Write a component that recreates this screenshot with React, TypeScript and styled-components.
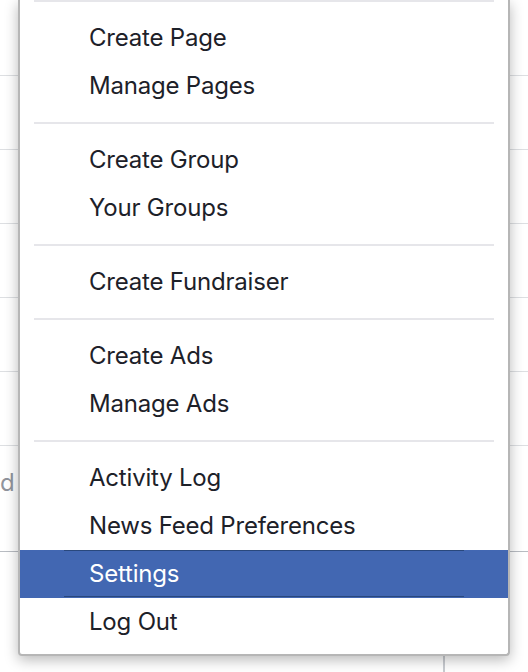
import React from "react";
import styled, { createGlobalStyle } from "styled-components";

const Global = createGlobalStyle`
  html, body { margin: 0; padding: 0; background: #fff; }
  body { font-family: Inter, "Helvetica Neue", Arial, sans-serif; -webkit-font-smoothing: antialiased; }
  * { box-sizing: border-box; }
`;

const Page = styled.div`
  position: relative;
  width: 528px;
  height: 672px;
  overflow: hidden;
  background: #fff;
`;

const Backdrop = styled.div`
  display: flex;
  flex-direction: column;
  height: 100%;
`;

const BgRow = styled.div<{ $h: number }>`
  height: ${(p) => p.$h}px;
  flex: none;
  border-bottom: 1px solid #dddfe2;
`;

const BgTextRow = styled.div`
  height: 106px;
  flex: none;
  border-bottom: 1px solid #b8bcc2;
  display: flex;
  align-items: flex-start;
  padding-top: 23px;
`;

const BgText = styled.span`
  font-size: 24px;
  line-height: 28px;
  color: #90949c;
  white-space: nowrap;
`;

const BgBottom = styled.div`
  flex: 1;
  margin-left: 443px;
  border-left: 2px solid #c9ccd1;
`;

const Menu = styled.div`
  position: absolute;
  left: 18px;
  top: 0;
  width: 492px;
  background: #fff;
  border: 2px solid #b6b6b6;
  border-top: none;
  border-radius: 0 0 4px 4px;
  box-shadow: 0 4px 14px rgba(0, 0, 0, 0.28);
`;

const Separator = styled.div`
  height: 2px;
  margin: 0 14px;
  background: #e6e6ea;
`;

const Section = styled.ul<{ $last?: boolean }>`
  list-style: none;
  margin: 0;
  padding: 12px 0 ${(p) => (p.$last ? 8 : 12)}px;
`;

const Item = styled.li<{ $active?: boolean }>`
  height: 48px;
  background: ${(p) => (p.$active ? "#4267b2" : "transparent")};
  color: ${(p) => (p.$active ? "#fff" : "#1d2129")};
`;

const ItemInner = styled.span<{ $active?: boolean }>`
  display: flex;
  align-items: center;
  height: ${(p) => (p.$active ? 47 : 48)}px;
  margin: 0 44px;
  padding-left: 25px;
  padding-bottom: 1px;
  border-top: ${(p) => (p.$active ? "1px solid #29487d" : "none")};
  border-bottom: ${(p) => (p.$active ? "1px solid #29487d" : "none")};
  font-size: 24px;
  letter-spacing: -0.2px;
  white-space: nowrap;
`;

const sections: string[][] = [
  ["Create Page", "Manage Pages"],
  ["Create Group", "Your Groups"],
  ["Create Fundraiser"],
  ["Create Ads", "Manage Ads"],
  ["Activity Log", "News Feed Preferences", "Settings", "Log Out"],
];

export default function App() {
  return (
    <Page>
      <Global />
      <Backdrop>
        <BgRow $h={76} />
        <BgRow $h={74} />
        <BgRow $h={74} />
        <BgRow $h={74} />
        <BgRow $h={74} />
        <BgRow $h={74} />
        <BgTextRow>
          <BgText>d</BgText>
        </BgTextRow>
        <BgBottom />
      </Backdrop>
      <Menu>
        {sections.map((items, i) => (
          <React.Fragment key={i}>
            <Separator />
            <Section $last={i === sections.length - 1}>
              {items.map((label) => {
                const active = label === "Settings";
                return (
                  <Item key={label} $active={active}>
                    <ItemInner $active={active}>{label}</ItemInner>
                  </Item>
                );
              })}
            </Section>
          </React.Fragment>
        ))}
      </Menu>
    </Page>
  );
}
